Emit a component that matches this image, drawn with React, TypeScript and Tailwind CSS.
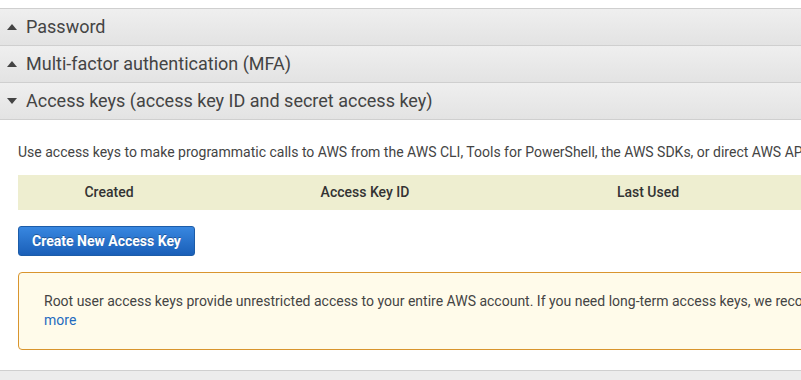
function Triangle({ open }: { open: boolean }) {
  return (
    <svg width="10" height="6" viewBox="0 0 10 6" className="shrink-0 fill-[#444]">
      {open ? <path d="M0 0 L10 0 L5 6 Z" /> : <path d="M0 6 L10 6 L5 0 Z" />}
    </svg>
  );
}

function SectionHeader({ title, open = false }: { title: string; open?: boolean }) {
  return (
    <div className="h-[37px] flex items-center gap-[9px] pl-[7px] border-b border-[#cfcfcf] bg-gradient-to-b from-[#efefef] to-[#e3e3e3]">
      <Triangle open={open} />
      <span className="text-[18px] text-[#444] leading-none">{title}</span>
    </div>
  );
}

export default function App() {
  return (
    <div className="w-[801px] h-[380px] overflow-hidden bg-white font-['Roboto',sans-serif]">
      <div className="w-[1100px]">
        <div className="h-[9px] border-b border-[#cfcfcf]" />
        <SectionHeader title="Password" />
        <SectionHeader title="Multi-factor authentication (MFA)" />
        <SectionHeader title="Access keys (access key ID and secret access key)" open />

        <div className="pl-[18px] pt-[22px]">
          <p className="text-[14px] text-[#444] leading-[20px] whitespace-nowrap">
            Use access keys to make programmatic calls to AWS from the AWS CLI, Tools for PowerShell, the AWS SDKs, or direct AWS API calls.
          </p>

          <div className="mt-[13px] h-[35px] bg-[#eeeed0] flex items-center text-[14px] font-medium text-[#333]">
            <div className="w-[182px] text-center">Created</div>
            <div className="w-[330px] text-center">Access Key ID</div>
            <div className="w-[236px] text-center">Last Used</div>
          </div>

          <button className="mt-[16px] h-[30px] w-[177px] rounded-[3px] border border-[#1c5ca8] bg-gradient-to-b from-[#3887e0] to-[#1a5fb8] text-white text-[14px] font-bold [text-shadow:0_-1px_0_rgba(0,0,0,0.3)] flex items-center justify-center">
            Create New Access Key
          </button>

          <div className="mt-[16px] h-[78px] w-[1000px] rounded-[4px] border border-[#d9952e] bg-[#fffbea] pl-[25px] pt-[19px] text-[14px] leading-[19px] text-[#444]">
            <div className="whitespace-nowrap">
              Root user access keys provide unrestricted access to your entire AWS account. If you need long-term access keys, we recommend creating a new IAM user
            </div>
            <div className="text-[#1f6bbf]">more</div>
          </div>
        </div>

        <div className="mt-[20px] border-t border-[#cfcfcf] h-[20px] bg-[#ececec]" />
      </div>
    </div>
  );
}
